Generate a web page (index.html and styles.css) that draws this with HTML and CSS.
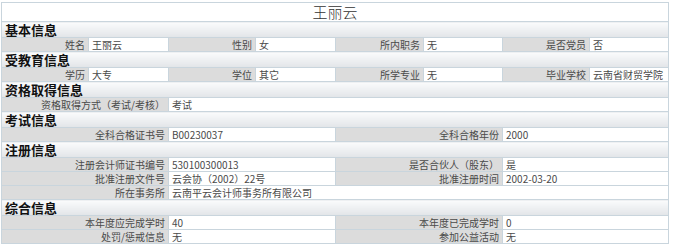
FILE: index.html
```html
<!DOCTYPE html>
<html lang="zh-CN">
<head>
<meta charset="utf-8">
<title>王丽云</title>
<link rel="stylesheet" href="styles.css">
</head>
<body>
<table class="info">
  <colgroup>
    <col class="c1"><col class="c2"><col class="c3"><col class="c4">
    <col class="c5"><col class="c6"><col class="c7"><col class="c8">
  </colgroup>
  <tr class="title-row"><td colspan="8" class="title">王丽云</td></tr>

  <tr class="sec-row"><td colspan="8" class="sec">基本信息</td></tr>
  <tr class="row">
    <td class="lb">姓名</td><td class="vl">王丽云</td>
    <td class="lb">性别</td><td class="vl">女</td>
    <td class="lb">所内职务</td><td class="vl">无</td>
    <td class="lb">是否党员</td><td class="vl">否</td>
  </tr>

  <tr class="sec-row"><td colspan="8" class="sec">受教育信息</td></tr>
  <tr class="row">
    <td class="lb">学历</td><td class="vl">大专</td>
    <td class="lb">学位</td><td class="vl">其它</td>
    <td class="lb">所学专业</td><td class="vl">无</td>
    <td class="lb">毕业学校</td><td class="vl">云南省财贸学院</td>
  </tr>

  <tr class="sec-row"><td colspan="8" class="sec">资格取得信息</td></tr>
  <tr class="row">
    <td class="lb" colspan="2">资格取得方式（考试/考核）</td><td class="vl" colspan="6">考试</td>
  </tr>

  <tr class="sec-row"><td colspan="8" class="sec">考试信息</td></tr>
  <tr class="row">
    <td class="lb" colspan="2">全科合格证书号</td><td class="vl" colspan="2">B00230037</td>
    <td class="lb" colspan="2">全科合格年份</td><td class="vl" colspan="2">2000</td>
  </tr>

  <tr class="sec-row"><td colspan="8" class="sec">注册信息</td></tr>
  <tr class="row">
    <td class="lb" colspan="2">注册会计师证书编号</td><td class="vl" colspan="2">530100300013</td>
    <td class="lb" colspan="2">是否合伙人（股东）</td><td class="vl" colspan="2">是</td>
  </tr>
  <tr class="row">
    <td class="lb" colspan="2">批准注册文件号</td><td class="vl" colspan="2">云会协（2002）22号</td>
    <td class="lb" colspan="2">批准注册时间</td><td class="vl" colspan="2">2002-03-20</td>
  </tr>
  <tr class="row">
    <td class="lb" colspan="2">所在事务所</td><td class="vl" colspan="6">云南平云会计师事务所有限公司</td>
  </tr>

  <tr class="sec-row"><td colspan="8" class="sec">综合信息</td></tr>
  <tr class="row">
    <td class="lb" colspan="2">本年度应完成学时</td><td class="vl" colspan="2">40</td>
    <td class="lb" colspan="2">本年度已完成学时</td><td class="vl" colspan="2">0</td>
  </tr>
  <tr class="row">
    <td class="lb" colspan="2">处罚/惩戒信息</td><td class="vl" colspan="2">无</td>
    <td class="lb" colspan="2">参加公益活动</td><td class="vl" colspan="2">无</td>
  </tr>
</table>
</body>
</html>
```

FILE: styles.css
```css
html, body {
  margin: 0;
  padding: 0;
  background: #ffffff;
}
body {
  padding: 2px 0 0 1px;
  font-family: "Noto Sans CJK SC", "DejaVu Sans", sans-serif;
}
.info {
  width: 667px;
  table-layout: fixed;
  border-collapse: collapse;
  border: 1px solid #c9d5dd;
}
.c1 { width: 87px; }
.c2 { width: 80px; }
.c3 { width: 87px; }
.c4 { width: 80px; }
.c5 { width: 88px; }
.c6 { width: 79px; }
.c7 { width: 87px; }
.c8 { width: 79px; }
.info td {
  border: 1px solid #c9d5dd;
  padding: 0 3px;
  white-space: nowrap;
}
.title-row { height: 19px; }
.title {
  text-align: center;
  font-size: 15px;
  color: #333333;
  background: #ffffff;
  line-height: 18px;
  font-weight: 300;
}
.sec-row { height: 16px; }
.sec {
  background: linear-gradient(to bottom, #fafbfc 0%, #eef0f2 50%, #e2e5e8 100%);
  font-size: 13px;
  font-weight: bold;
  color: #111111;
  line-height: 15px;
  padding-left: 3px;
}
.row { height: 14px; }
.lb {
  background: #dcdcdc;
  text-align: right;
  font-size: 10px;
  line-height: 13px;
  color: #4a4a4a;
}
.vl {
  background: #ffffff;
  text-align: left;
  font-size: 10px;
  line-height: 13px;
  color: #4a4a4a;
}
```
